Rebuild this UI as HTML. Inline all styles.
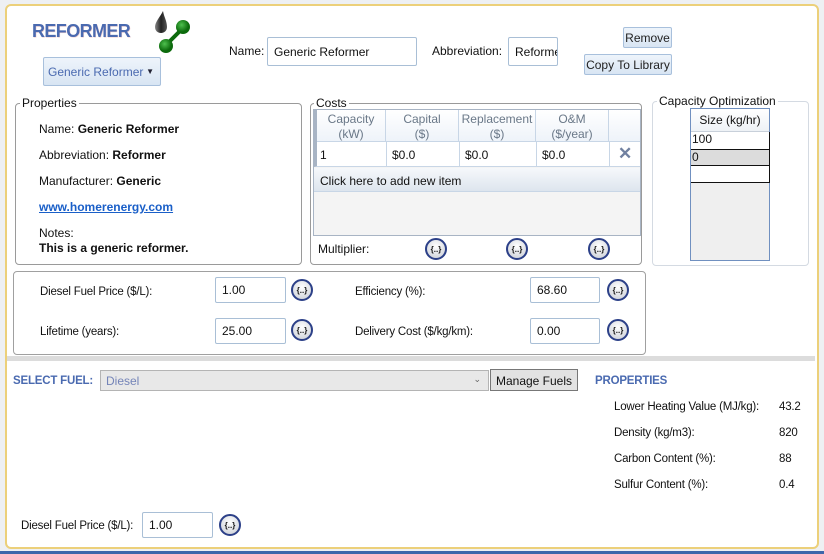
<!DOCTYPE html>
<html><head><meta charset="utf-8"><style>
*{box-sizing:border-box;margin:0;padding:0}
body{width:824px;height:554px;background:#eef0f3;position:relative;overflow:hidden;font-family:"Liberation Sans",sans-serif;font-size:12px;color:#111}
.a{position:absolute;white-space:nowrap}
.panel{left:5px;top:4px;width:814px;height:545px;background:#fff;border:2px solid #ecd07a;border-radius:6px}
.inp{position:absolute;background:#fff;border:1px solid #a9bfd6;border-radius:2px;padding:0 6px;display:flex;align-items:center;font-size:12px;overflow:hidden;white-space:nowrap}
.btn{position:absolute;border:1px solid #a8c0dc;border-radius:2px;background:linear-gradient(#eef4fb,#d8e5f3);display:flex;align-items:center;justify-content:center;font-size:12px;color:#222}
.grp{position:absolute;border:1px solid #9a9a9a;border-radius:4px}
.leg{position:absolute;background:#fff;padding:0 2px;font-size:12px;color:#111}
.vb{position:absolute;width:22px;height:22px;border-radius:50%;border:2px solid #2c4088;background:radial-gradient(circle at 50% 35%,#fff,#c8ccd4);font-size:8px;font-weight:bold;display:flex;align-items:center;justify-content:center;color:#111}
.th{position:absolute;top:0;height:32px;border-right:1px solid #c8d6e6;text-align:center;color:#6a7888;font-size:12px;line-height:15px;padding-top:2px}
.blue{color:#4a6ab0;font-weight:bold}
.nar{font-size:11.5px;letter-spacing:-0.2px}
</style></head><body>
<div class="a panel"></div>
<div class="a" style="left:0;top:551px;width:824px;height:3px;background:#3d66aa"></div>

<div class="a" style="left:32px;top:21px;font-size:18px;font-weight:bold;color:#4a6ab0;letter-spacing:-0.6px;text-shadow:0.5px 0.5px 0.5px #f0c8c8">REFORMER</div>
<svg class="a" style="left:150px;top:8px" width="46" height="46" viewBox="0 0 46 46">
<defs><linearGradient id="dg" x1="0" x2="1"><stop offset="0" stop-color="#888"/><stop offset="0.5" stop-color="#222"/><stop offset="1" stop-color="#555"/></linearGradient>
<radialGradient id="gg" cx="0.4" cy="0.35"><stop offset="0" stop-color="#4ec04e"/><stop offset="1" stop-color="#0c6a0c"/></radialGradient></defs>
<path d="M13 3 C10 9 5 14 5 19 C5 23 8 25 11 25 C14 25 17 23 17 19 C17 13 14 9 13 3Z" fill="url(#dg)"/>
<line x1="33" y1="20" x2="16" y2="37" stroke="#0c6a0c" stroke-width="4"/>
<circle cx="33" cy="19" r="7" fill="url(#gg)"/><circle cx="16" cy="38" r="7" fill="url(#gg)"/>
</svg>
<div class="btn" style="left:43px;top:57px;width:118px;height:29px;justify-content:flex-start;padding-left:4px;color:#4a6ab0">Generic Reformer<span style="position:absolute;right:6px;top:9px;font-size:8px;color:#223">▼</span></div>

<div class="a" style="left:229px;top:44px">Name:</div>
<div class="inp" style="left:267px;top:37px;width:150px;height:29px">Generic Reformer</div>
<div class="a" style="left:432px;top:44px">Abbreviation:</div>
<div class="inp" style="left:508px;top:37px;width:50px;height:29px">Reformer</div>
<div class="btn" style="left:623px;top:27px;width:49px;height:21px">Remove</div>
<div class="btn" style="left:584px;top:54px;width:88px;height:21px">Copy To Library</div>

<div class="grp" style="left:15px;top:103px;width:287px;height:162px"></div>
<div class="leg" style="left:20px;top:96px">Properties</div>
<div class="a" style="left:39px;top:122px">Name: <b>Generic Reformer</b></div>
<div class="a" style="left:39px;top:148px">Abbreviation: <b>Reformer</b></div>
<div class="a" style="left:39px;top:174px">Manufacturer: <b>Generic</b></div>
<div class="a" style="left:39px;top:200px;color:#1a5fc8;font-weight:bold;text-decoration:underline">www.homerenergy.com</div>
<div class="a" style="left:39px;top:226px">Notes:</div>
<div class="a" style="left:39px;top:241px;font-weight:bold">This is a generic reformer.</div>

<div class="grp" style="left:310px;top:103px;width:332px;height:162px"></div>
<div class="leg" style="left:314px;top:96px">Costs</div>
<div class="a" style="left:313px;top:109px;width:328px;height:127px;border:1px solid #a8b4c4;background:#f4f4f4;overflow:hidden">
 <div class="a" style="left:0;top:0;width:328px;height:32px;background:linear-gradient(#fff,#eef3f9);border-bottom:1px solid #c8d6e6"></div>
 <div class="th" style="left:0;width:72px;border-left:3px solid #a8b4c4">Capacity<br>(kW)</div>
 <div class="th" style="left:72px;width:73px">Capital<br>($)</div>
 <div class="th" style="left:145px;width:77px">Replacement<br>($)</div>
 <div class="th" style="left:222px;width:73px">O&amp;M<br>($/year)</div>
 <div class="a" style="left:0;top:32px;width:328px;height:25px;background:#fff;border-bottom:1px solid #c8d6e6;border-left:3px solid #a8b4c4"></div>
 <div class="a" style="left:72px;top:32px;width:1px;height:25px;background:#c8d6e6"></div>
 <div class="a" style="left:145px;top:32px;width:1px;height:25px;background:#c8d6e6"></div>
 <div class="a" style="left:222px;top:32px;width:1px;height:25px;background:#c8d6e6"></div>
 <div class="a" style="left:295px;top:32px;width:1px;height:25px;background:#c8d6e6"></div>
 <div class="a" style="left:6px;top:38px">1</div>
 <div class="a" style="left:78px;top:38px">$0.0</div>
 <div class="a" style="left:151px;top:38px">$0.0</div>
 <div class="a" style="left:228px;top:38px">$0.0</div>
 <div class="a" style="left:304px;top:34px;font-size:17px;color:#7080a0;font-weight:bold">✕</div>
 <div class="a" style="left:0;top:58px;width:328px;height:24px;background:linear-gradient(#f6f8fb,#dde5ee);border-bottom:1px solid #c8d6e6;padding:6px 0 0 6px">Click here to add new item</div>
</div>
<div class="a" style="left:318px;top:242px">Multiplier:</div>
<div class="vb" style="left:425px;top:238px">{..}</div>
<div class="vb" style="left:506px;top:238px">{..}</div>
<div class="vb" style="left:588px;top:238px">{..}</div>

<div class="grp" style="left:652px;top:101px;width:157px;height:165px;border-color:#d4dae2"></div>
<div class="leg" style="left:657px;top:94px">Capacity Optimization</div>
<div class="a" style="left:690px;top:108px;width:80px;height:153px;border:1px solid #7090c0;background:#efefef">
 <div class="a" style="left:0;top:0;width:78px;height:23px;background:linear-gradient(#fff,#eef2f6);border-bottom:1px solid #c8d0da;text-align:center;padding-top:4px">Size (kg/hr)</div>
 <div class="a" style="left:0;top:23px;width:79px;height:17px;background:#fff;border-right:1px solid #111;padding-left:1px">100</div>
 <div class="a" style="left:0;top:40px;width:79px;height:17px;background:#dcdcdc;border:1px solid #111;border-left:0;padding-left:1px">0</div>
 <div class="a" style="left:0;top:57px;width:79px;height:17px;background:#fff;border:1px solid #111;border-left:0;border-top:0"></div>
</div>

<div class="grp" style="left:13px;top:271px;width:633px;height:84px;border-color:#a0a0a0"></div>
<div class="a nar" style="left:40px;top:286px">Diesel Fuel Price ($/L):</div>
<div class="inp" style="left:215px;top:277px;width:71px;height:26px">1.00</div>
<div class="vb" style="left:291px;top:279px">{..}</div>
<div class="a nar" style="left:355px;top:286px">Efficiency (%):</div>
<div class="inp" style="left:530px;top:277px;width:70px;height:26px">68.60</div>
<div class="vb" style="left:607px;top:279px">{..}</div>
<div class="a nar" style="left:40px;top:326px">Lifetime (years):</div>
<div class="inp" style="left:215px;top:318px;width:71px;height:26px">25.00</div>
<div class="vb" style="left:291px;top:319px">{..}</div>
<div class="a nar" style="left:355px;top:326px">Delivery Cost ($/kg/km):</div>
<div class="inp" style="left:530px;top:318px;width:70px;height:26px">0.00</div>
<div class="vb" style="left:607px;top:319px">{..}</div>

<div class="a" style="left:7px;top:356px;width:808px;height:5px;background:#dcdcdc"></div>

<div class="a blue nar" style="left:13px;top:375px">SELECT FUEL:</div>
<div class="a" style="left:100px;top:370px;width:389px;height:21px;background:#e8e8e8;border:1px solid #b4b4b4;color:#7484b8;padding:3px 5px">Diesel<span style="position:absolute;right:7px;top:3px;font-size:9px;color:#666">⌄</span></div>
<div class="a" style="left:490px;top:369px;width:88px;height:22px;background:#e2e2e2;border:1px solid #777;text-align:center;padding-top:4px">Manage Fuels</div>
<div class="a blue nar" style="left:595px;top:375px">PROPERTIES</div>
<div class="a nar" style="left:614px;top:401px">Lower Heating Value (MJ/kg):</div><div class="a nar" style="left:779px;top:401px">43.2</div>
<div class="a nar" style="left:614px;top:427px">Density (kg/m3):</div><div class="a nar" style="left:779px;top:427px">820</div>
<div class="a nar" style="left:614px;top:453px">Carbon Content (%):</div><div class="a nar" style="left:779px;top:453px">88</div>
<div class="a nar" style="left:614px;top:479px">Sulfur Content (%):</div><div class="a nar" style="left:779px;top:479px">0.4</div>

<div class="a nar" style="left:21px;top:520px">Diesel Fuel Price ($/L):</div>
<div class="inp" style="left:142px;top:512px;width:71px;height:26px">1.00</div>
<div class="vb" style="left:219px;top:514px">{..}</div>
</body></html>
